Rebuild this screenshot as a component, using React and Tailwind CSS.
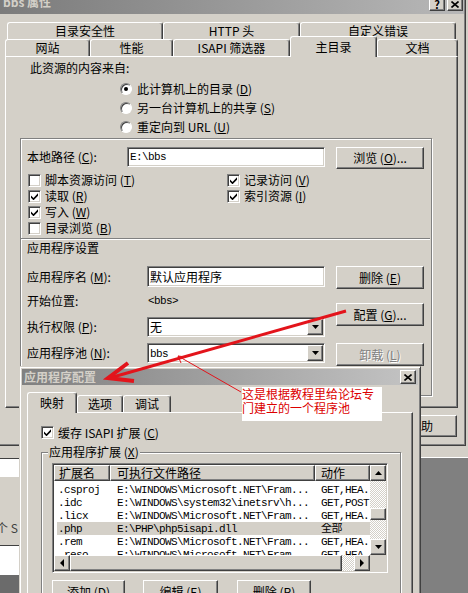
import React from "react";

const raised =
  "border border-t-white border-l-white border-r-[#404040] border-b-[#404040] shadow-[inset_-1px_-1px_#808080]";
const sunken =
  "border border-t-[#808080] border-l-[#808080] border-r-white border-b-white shadow-[inset_1px_1px_#404040,inset_-1px_-1px_#d4d0c8]";
const etched = "border border-[#808080] shadow-[inset_1px_1px_#fff,1px_1px_#fff]";
const mono = "font-['Liberation_Mono','Noto_Sans_CJK_SC',monospace] text-[11px] tracking-[-0.6px]";
const tab =
  "flex items-center justify-center bg-[#d4d0c8] border-t border-l border-r border-t-white border-l-white border-r-[#404040] rounded-t-[3px] shadow-[inset_-1px_0_#808080]";
const checker =
  "bg-[image:repeating-conic-gradient(#fff_0_25%,#d4d0c8_0_50%)] bg-[length:2px_2px]";

const Tri = ({ dir }) => {
  const pts = {
    down: "0,0 7,0 3.5,4",
    up: "0,4 7,4 3.5,0",
    left: "4,0 4,8 0,4",
    right: "0,0 0,8 4,4",
  }[dir];
  const side = dir === "left" || dir === "right";
  return (
    <svg width={side ? 4 : 7} height={side ? 8 : 4} viewBox={side ? "0 0 4 8" : "0 0 7 4"}>
      <polygon points={pts} fill="#000" />
    </svg>
  );
};

const ArrowBtn = ({ dir }) => (
  <span className={`w-[16px] h-[16px] shrink-0 flex items-center justify-center bg-[#d4d0c8] ${raised}`}>
    <Tri dir={dir} />
  </span>
);

const Check = ({ on }) => (
  <span className={`w-[13px] h-[13px] shrink-0 bg-white flex items-center justify-center ${sunken}`}>
    {on && (
      <svg width="7" height="7" viewBox="0 0 7 7">
        <path d="M0 2.5L2.5 5L7 0.3V2.8L2.5 7.3L0 4.8Z" fill="#000" />
      </svg>
    )}
  </span>
);

const Radio = ({ on, children }) => (
  <div className="h-[19px] flex items-center gap-[5px]">
    <span className="w-[12px] h-[12px] rounded-full bg-white border border-t-[#808080] border-l-[#808080] border-r-white border-b-white shadow-[inset_1px_1px_#404040] flex items-center justify-center">
      {on && <span className="w-[4px] h-[4px] rounded-full bg-black" />}
    </span>
    <span>{children}</span>
  </div>
);

const CheckRow = ({ on, children }) => (
  <div className="h-[16px] flex items-center gap-[4px]">
    <Check on={on} />
    <span>{children}</span>
  </div>
);

const Select = ({ value }) => (
  <div className={`w-[178px] h-[20px] bg-white flex items-center justify-between p-[1px] ${sunken}`}>
    <span className="pl-[1px]">{value}</span>
    <ArrowBtn dir="down" />
  </div>
);

const Button = ({ className, disabled, children }) => (
  <div
    className={`flex items-center justify-center bg-[#d4d0c8] ${raised} ${className} ${
      disabled ? "text-[#808080] [text-shadow:1px_1px_#fff]" : ""
    }`}
  >
    {children}
  </div>
);

const win = "E:\\WINDOWS\\Microsoft.NET\\Fram...";
const rows = [
  [".csproj", win, "GET,HEA..."],
  [".idc", "E:\\WINDOWS\\system32\\inetsrv\\h...", "GET,POST"],
  [".licx", win, "GET,HEA..."],
  [".php", "E:\\PHP\\php5isapi.dll", "全部", true],
  [".rem", win, "GET,HEA..."],
  [".reso", win, "GET,HEA..."],
];

export default function App() {
  return (
    <div className="relative w-[468px] h-[593px] overflow-hidden bg-[#d4d0c8] text-black text-[12px] leading-[12px] font-['Noto_Sans_CJK_SC',sans-serif]">
      {/* back window: bbs 属性 */}
      <div className="h-[446px] w-[466px] flex flex-col border-r border-b border-[#404040] shadow-[inset_-1px_-1px_#808080]">
        <div className="h-[14px] w-[464px] shrink-0 flex items-start justify-between overflow-hidden bg-linear-to-r from-[#7b7b7b] to-[#b8b8b8]">
          <span className="ml-[3px] -mt-[5px] font-bold text-[#d4d0c8] leading-[14px]">bbs 属性</span>
          <div className="flex gap-[2px] mr-[1px] -mt-[3px]">
            <span className={`w-[16px] h-[14px] bg-[#d4d0c8] flex items-center justify-center font-bold text-[11px] ${raised}`}>?</span>
            <span className={`w-[16px] h-[14px] bg-[#d4d0c8] flex items-center justify-center ${raised}`}>
              <svg width="8" height="7" viewBox="0 0 8 7">
                <path d="M0.5 0.5L7.5 6.5M7.5 0.5L0.5 6.5" stroke="#000" strokeWidth="1.6" />
              </svg>
            </span>
          </div>
        </div>

        <div className="mt-[8px] ml-[7px] flex h-[17px]">
          <div className={`${tab} w-[156px] h-[17px]`}>目录安全性</div>
          <div className={`${tab} w-[137px] h-[17px]`}>HTTP 头</div>
          <div className={`${tab} w-[156px] h-[17px]`}>自定义错误</div>
        </div>
        <div className="ml-[5px] flex items-end h-[17px]">
          <div className={`${tab} w-[85px] h-[17px]`}>网站</div>
          <div className={`${tab} w-[83px] h-[17px]`}>性能</div>
          <div className={`${tab} w-[117px] h-[17px]`}>ISAPI 筛选器</div>
          <div className={`${tab} w-[87px] h-[21px] -mb-[1px] relative z-10`}>主目录</div>
          <div className={`${tab} w-[81px] h-[17px]`}>文档</div>
        </div>

        <div className="ml-[5px] w-[453px] h-[352px] shrink-0 border border-t-white border-l-white border-r-[#404040] border-b-[#404040] shadow-[inset_-1px_-1px_#808080]">
          <div className="pl-[24px] mt-[5px]">此资源的内容来自:</div>
          <div className="mt-[5px] ml-[114px] flex flex-col">
            <Radio on>此计算机上的目录 (<u>D</u>)</Radio>
            <Radio>另一台计算机上的共享 (<u>S</u>)</Radio>
            <Radio>重定向到 URL (<u>U</u>)</Radio>
          </div>

          <div className={`mt-[2px] ml-[14px] w-[412px] h-[258px] ${etched}`}>
            <div className="mt-[8px] flex items-start">
              <div className="w-[106px] h-[20px] pl-[6px] flex items-center">本地路径 (<u>C</u>):</div>
              <div className={`w-[198px] h-[20px] bg-white flex items-center pl-[2px] ${sunken}`}>
                <span className={mono}>E:\bbs</span>
              </div>
              <Button className="ml-[11px] w-[88px] h-[22px]">浏览 (<u>O</u>)...</Button>
            </div>

            <div className="mt-[3px] pl-[7px] grid grid-cols-[199px_1fr]">
              <div>
                <CheckRow>脚本资源访问 (<u>T</u>)</CheckRow>
                <CheckRow on>读取 (<u>R</u>)</CheckRow>
                <CheckRow on>写入 (<u>W</u>)</CheckRow>
                <CheckRow>目录浏览 (<u>B</u>)</CheckRow>
              </div>
              <div>
                <CheckRow on>记录访问 (<u>V</u>)</CheckRow>
                <CheckRow on>索引资源 (<u>I</u>)</CheckRow>
              </div>
            </div>

            <div className="mt-[2px] w-[409px] h-[2px] border-t border-t-[#808080] border-b border-b-white" />
            <div className="mt-[2px] pl-[6px]">应用程序设置</div>

            <div className="mt-[12px] pl-[6px] flex items-start">
              <div className="w-[298px] flex flex-col">
                <div className="h-[21px] flex items-center">
                  <span className="w-[120px]">应用程序名 (<u>M</u>):</span>
                  <div className={`w-[178px] h-[21px] bg-white flex items-center pl-[2px] ${sunken}`}>默认应用程序</div>
                </div>
                <div className="mt-[8px] h-[12px] flex items-center">
                  <span className="w-[121px]">开始位置:</span>
                  <span className={mono}>&lt;bbs&gt;</span>
                </div>
                <div className="mt-[10px] h-[20px] flex items-center">
                  <span className="w-[120px]">执行权限 (<u>P</u>):</span>
                  <Select value="无" />
                </div>
                <div className="mt-[6px] h-[20px] flex items-center">
                  <span className="w-[120px]">应用程序池 (<u>N</u>):</span>
                  <Select value={<span className={mono}>bbs</span>} />
                </div>
              </div>
              <div className="ml-[11px] flex flex-col">
                <Button className="w-[88px] h-[23px]">删除 (<u>E</u>)</Button>
                <Button className="mt-[14px] w-[88px] h-[23px]">配置 (<u>G</u>)...</Button>
                <Button disabled className="mt-[17px] w-[88px] h-[23px]">卸载 (<u>L</u>)</Button>
              </div>
            </div>
          </div>
        </div>

        <div className="mt-[7px] flex justify-end pr-[8px]">
          <Button className="w-[72px] h-[22px]">帮助</Button>
        </div>
      </div>

      {/* whatever lies below the back window */}
      <div className="flex h-[147px]">
        <div className="w-[20px] flex flex-col overflow-hidden">
          <div className="h-[12px]" />
          <div className="h-[1px] bg-[#404040]" />
          <div className="h-[18px] bg-white" />
          <div className="h-[68px] pt-[45px] -ml-[4px] whitespace-nowrap text-[#404040]">个 S</div>
          <div className="h-[1px] bg-[#404040]" />
          <div className="h-[29px] bg-white" />
          <div className="flex-1 bg-[#6b6b6b]" />
        </div>
        <div className="flex-1 flex flex-col">
          <div className="h-[11px]" />
          <div className="h-[1px] bg-white" />
          <div className="flex-1 bg-[#808080]" />
        </div>
      </div>

      {/* front window: 应用程序配置 */}
      <div className="absolute left-[19px] top-[366px] w-[402px] h-[240px] flex flex-col bg-[#d4d0c8] border border-t-[#d4d0c8] border-l-[#d4d0c8] border-r-[#404040] border-b-[#404040] shadow-[inset_1px_1px_#fff,inset_-1px_-1px_#808080] p-[2px]">
        <div className="h-[16px] shrink-0 flex items-center justify-between bg-linear-to-r from-[#808080] to-[#c4c4c4]">
          <span className="ml-[2px] font-bold text-[#d4d0c8]">应用程序配置</span>
          <span className={`w-[16px] h-[14px] mr-[2px] bg-[#d4d0c8] flex items-center justify-center ${raised}`}>
            <svg width="8" height="7" viewBox="0 0 8 7">
              <path d="M0.5 0.5L7.5 6.5M7.5 0.5L0.5 6.5" stroke="#000" strokeWidth="1.6" />
            </svg>
          </span>
        </div>

        <div className="mt-[7px] ml-[5px] flex items-end h-[20px] shrink-0">
          <div className={`${tab} w-[50px] h-[21px] -mb-[1px] relative z-10`}>映射</div>
          <div className={`${tab} w-[46px] h-[17px]`}>选项</div>
          <div className={`${tab} w-[48px] h-[17px]`}>调试</div>
        </div>

        <div className="ml-[5px] w-[386px] flex-1 border border-t-white border-l-white border-r-[#404040] border-b-[#404040] shadow-[inset_-1px_-1px_#808080]">
          <div className="mt-[13px] ml-[13px] flex items-center gap-[4px]">
            <Check on />
            <span>缓存 ISAPI 扩展 (<u>C</u>)</span>
          </div>

          <div className={`mt-[13px] ml-[13px] w-[360px] h-[200px] ${etched}`}>
            <div className="-mt-[8px] ml-[6px] px-[1px] w-fit bg-[#d4d0c8] leading-[14px]">应用程序扩展 (<u>X</u>)</div>
            <div className={`mt-[4px] ml-[10px] w-[336px] h-[110px] bg-white p-[1px] flex flex-col ${sunken}`}>
              <div className="h-[90px] flex">
                <div className="w-[316px] overflow-hidden">
                  <div className="h-[16px] flex">
                    <div className={`w-[56px] h-[16px] pl-[4px] flex items-center bg-[#d4d0c8] ${raised}`}>扩展名</div>
                    <div className={`w-[205px] h-[16px] pl-[6px] flex items-center bg-[#d4d0c8] ${raised}`}>可执行文件路径</div>
                    <div className={`w-[55px] h-[16px] pl-[5px] flex items-center bg-[#d4d0c8] ${raised}`}>动作</div>
                  </div>
                  <div className="pt-[2px]">
                    {rows.map(([ext, path, act, sel]) => (
                      <div key={ext} className="pl-[3px] h-[13px]">
                        <div className={`h-[13px] flex items-center whitespace-nowrap ${sel ? "bg-[#d4d0c8]" : ""}`}>
                          <span className={`w-[53px] pl-[1px] ${mono}`}>{ext}</span>
                          <span className={`w-[205px] pl-[7px] overflow-hidden ${mono}`}>{path}</span>
                          <span className={`w-[55px] pl-[6px] overflow-hidden ${mono}`}>{act}</span>
                        </div>
                      </div>
                    ))}
                  </div>
                </div>
                <div className="w-[16px] flex flex-col">
                  <ArrowBtn dir="up" />
                  <div className={`h-[27px] ${checker}`} />
                  <div className={`h-[12px] bg-[#d4d0c8] ${raised}`} />
                  <div className={`flex-1 ${checker}`} />
                  <ArrowBtn dir="down" />
                </div>
              </div>
              <div className="h-[16px] flex">
                <ArrowBtn dir="left" />
                <div className={`w-[272px] h-[16px] bg-[#d4d0c8] ${raised}`} />
                <div className={`w-[12px] h-[16px] ${checker}`} />
                <ArrowBtn dir="right" />
                <div className="flex-1 bg-[#d4d0c8]" />
              </div>
            </div>
            <div className="mt-[7px] ml-[10px] flex">
              <Button className="w-[73px] h-[23px]">添加 (<u>D</u>)</Button>
              <Button className="ml-[18px] w-[75px] h-[23px]">编辑 (<u>E</u>)</Button>
              <Button className="ml-[19px] w-[74px] h-[23px]">删除 (<u>R</u>)</Button>
            </div>
          </div>
        </div>
      </div>

      {/* annotation note */}
      <div className="absolute left-[242px] top-[387px] w-[140px] h-[34px] bg-white text-[#dc0000] leading-[14px]">
        这是根据教程里给论坛专
        <br />
        门建立的一个程序池
      </div>

      {/* red arrows */}
      <svg className="absolute left-0 top-0 pointer-events-none" width="468" height="593" viewBox="0 0 468 593">
        <line x1="346" y1="311" x2="113" y2="377" stroke="#e3141b" strokeWidth="3" />
        <path d="M128 363L108 378L134 381" fill="none" stroke="#e3141b" strokeWidth="4" strokeLinejoin="miter" />
        <line x1="178" y1="356" x2="241" y2="392" stroke="#e3141b" strokeWidth="1" />
        <path d="M186 357L178 356L181 363" fill="none" stroke="#e3141b" strokeWidth="1" />
      </svg>
    </div>
  );
}
